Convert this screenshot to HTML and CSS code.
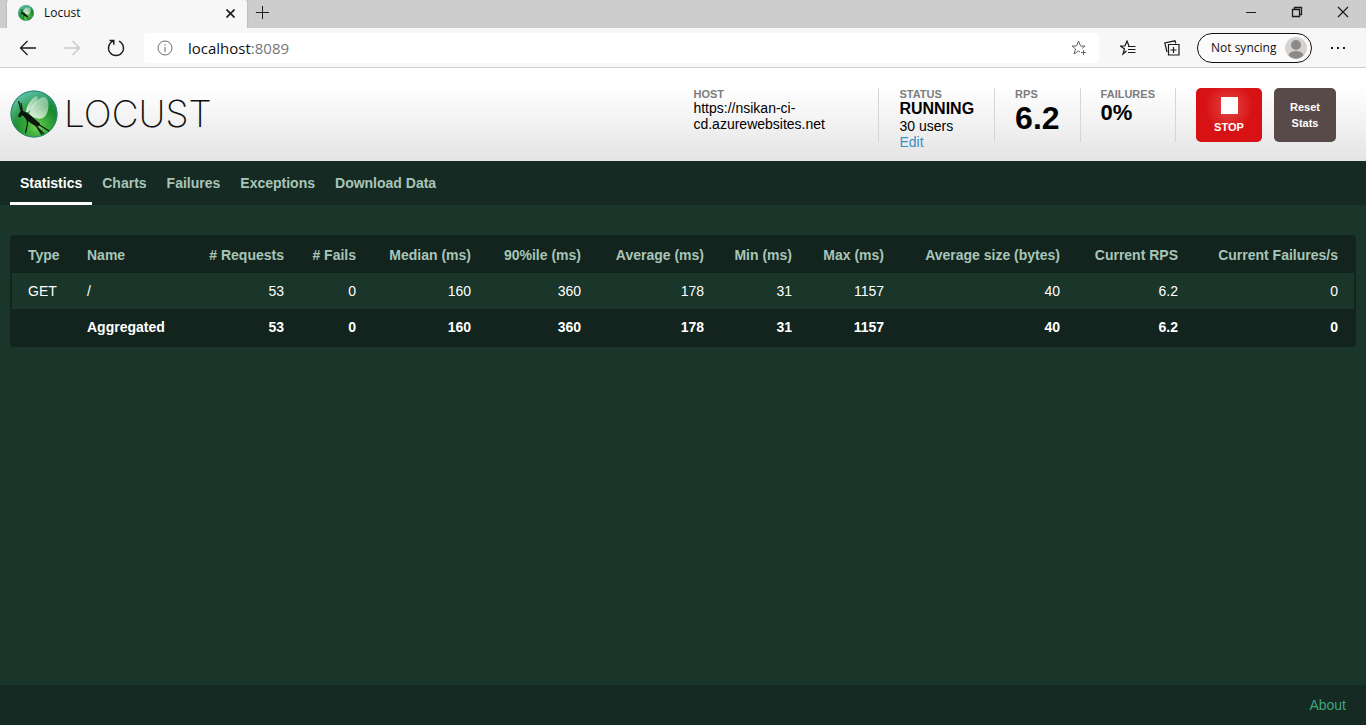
FILE: index.html
```
<!DOCTYPE html>
<html lang="en">
<head>
<meta charset="utf-8">
<title>Locust</title>
<link rel="stylesheet" href="styles.css">
</head>
<body>
<svg width="0" height="0" class="defs" aria-hidden="true">
  <defs>
    <radialGradient id="ball" cx="55%" cy="75%" r="70%">
      <stop offset="0" stop-color="#86e45c"/>
      <stop offset="0.3" stop-color="#45b540"/>
      <stop offset="0.65" stop-color="#1b8a30"/>
      <stop offset="1" stop-color="#2b9c84"/>
    </radialGradient>
    <linearGradient id="sheen" x1="0" y1="0" x2="0.7" y2="1">
      <stop offset="0" stop-color="#7fd8dc" stop-opacity="0.9"/>
      <stop offset="0.35" stop-color="#6cca90" stop-opacity="0.4"/>
      <stop offset="0.6" stop-color="#0d8a24" stop-opacity="0.25"/>
      <stop offset="1" stop-color="#0d6a34" stop-opacity="0"/>
    </linearGradient>
    <linearGradient id="wing" x1="1" y1="0" x2="0" y2="1">
      <stop offset="0" stop-color="#fff" stop-opacity="0.35"/>
      <stop offset="1" stop-color="#fff" stop-opacity="0.85"/>
    </linearGradient>
    <symbol id="locust" viewBox="0 0 48 48">
      <circle cx="24" cy="24" r="23.500" fill="url(#ball)"/>
      <circle cx="24" cy="24" r="23" fill="url(#sheen)" stroke="#2a8a78"/>
      <path d="M16 22C16 16 22 7 27 6c3 1-2 10-9 16z" fill="url(#wing)"/>
      <path d="M19 24C22 13 30 6 35 7c5 3 4 13 1 18-3 5-11 5-17-1z" fill="url(#wing)"/>
      <path d="M9 24l1.500-2.500 3-.5 2.500 1.500 3 1.500 5 4.500 6 5-1 3-6-2-6-4-3.500-4.500-2-.5-1 2-2.500-1z" fill="#0b140e"/>
      <path d="M11.500 22 8.500 11M12.500 22l-1.500-9M17 28l.5 6L15.500 43M21 31l13 13M25 34l7 11M28 34l11 7" fill="none" stroke="#0b140e" stroke-width="1.200"/>
    </symbol>
  </defs>
</svg>

<div class="browser">
  <div class="tabstrip">
    <div class="tab">
      <svg class="favicon"><use href="#locust"/></svg>
      <span class="tab-title">Locust</span>
      <button class="icon-button tab-close" aria-label="Close tab"><svg width="9" height="9" viewBox="0 0 9 9"><path d="M.5.5l8 8M8.500.5l-8 8" stroke-width="1.600"/></svg></button>
    </div>
    <button class="icon-button new-tab" aria-label="New tab"><svg width="13" height="13" viewBox="0 0 13 13"><path d="M6.500 0v13M0 6.500h13"/></svg></button>
    <div class="window-buttons">
      <button class="icon-button" aria-label="Minimize"><svg width="12" height="12" viewBox="0 0 12 12"><path d="M1 6.500h10"/></svg></button>
      <button class="icon-button" aria-label="Restore"><svg width="12" height="12" viewBox="0 0 12 12"><path d="M1.500 3.500h7v7h-7zM3.500 3.500v-2h7v7h-2" stroke-width="1.300"/></svg></button>
      <button class="icon-button" aria-label="Close"><svg width="12" height="12" viewBox="0 0 12 12"><path d="M1 1l10 10M11 1 1 11" stroke-width="1.200"/></svg></button>
    </div>
  </div>
  <div class="toolbar">
    <div class="history">
      <button class="icon-button" aria-label="Back"><svg width="18" height="16" viewBox="0 0 18 16"><path d="M17 8H2M8.500 1 1.500 8l7 7" stroke-width="1.300"/></svg></button>
      <button class="icon-button faded" aria-label="Forward"><svg width="18" height="16" viewBox="0 0 18 16"><path d="M1 8h15M9.500 1l7 7-7 7" stroke-width="1.300"/></svg></button>
      <button class="icon-button" aria-label="Refresh"><svg width="18" height="18" viewBox="0 0 18 18"><path d="M12 2.200A7.500 7.500 0 1 1 6 2.200M2.500 1.500h4.300v4.300" stroke-width="1.400"/></svg></button>
    </div>
    <div class="address">
      <svg class="info" width="16" height="16" viewBox="0 0 16 16"><circle cx="8" cy="8" r="7"/><path d="M8 7v5M8 4v1.500"/></svg>
      <span class="url">localhost<span class="port">:8089</span></span>
      <button class="icon-button star" aria-label="Add to favorites"><svg width="16" height="16" viewBox="0 0 16 16"><path d="M9 12l-1.500-1L3 14l1.500-5L1 6h4.500L7.500 1l2 5H14l-3 2.500M12.500 10v5M10 12.500h5"/></svg></button>
    </div>
    <div class="tools">
      <button class="icon-button" aria-label="Favorites"><svg width="16" height="16" viewBox="0 0 16 16"><path d="M6.500 11 3 14l1.500-5L.5 6h4.500L7 1l2 5M8 6.500h7.500M8 9.500h7.500M8 12.500h7.500" stroke-width="1.200"/></svg></button>
      <button class="icon-button" aria-label="Collections"><svg width="16" height="16" viewBox="0 0 16 16"><path d="M4.500 4.500h10.500v10.500h-10.500zM9.500 7v6M6.500 10h6M3 12 .8 3 11 .8l.8 2.700" stroke-width="1.200"/></svg></button>
    </div>
    <button class="profile">Not syncing
      <svg width="22" height="22" viewBox="0 0 22 22"><circle cx="11" cy="11" r="11" fill="#d5d3d1"/><circle cx="11" cy="8" r="5" fill="#8d8986"/><path d="M3.500 18c1-3 4-4 7.500-4s6.500 1 7.500 4c-4 5-11 5-15 0z" fill="#8d8986"/></svg>
    </button>
    <button class="icon-button more" aria-label="Settings and more"><svg width="16" height="4" viewBox="0 0 16 4"><path d="M1 1h2v2H1zM7 1h2v2H7zM13 1h2v2h-2z" class="dots"/></svg></button>
  </div>
</div>

<header class="top">
  <div class="logo"><svg class="mark"><use href="#locust"/></svg><span class="wordmark">LOCUST</span></div>
  <div class="boxes">
    <div class="box host"><div class="label">HOST</div><div class="text">https://nsikan-ci-cd.azurewebsites.net</div></div>
    <div class="box"><div class="label">STATUS</div><div class="state">RUNNING</div><div class="text">30 users</div><a class="edit" href="#edit">Edit</a></div>
    <div class="box"><div class="label">RPS</div><div class="rps">6.2</div></div>
    <div class="box"><div class="label">FAILURES</div><div class="fail">0%</div></div>
    <div class="actions">
      <button class="stop"><span class="square"></span>STOP</button>
      <button class="reset">Reset Stats</button>
    </div>
  </div>
</header>

<nav class="menu">
  <a class="active" href="#stats">Statistics</a>
  <a href="#charts">Charts</a>
  <a href="#failures">Failures</a>
  <a href="#exceptions">Exceptions</a>
  <a href="#download">Download Data</a>
</nav>

<main>
  <table class="stats">
    <colgroup><col class="type"><col class="name"><col class="requests"><col class="fails"><col class="median"><col class="ninety"><col class="average"><col class="min"><col class="max"><col class="size"><col class="current"><col class="failrate"></colgroup>
    <thead>
      <tr><th>Type</th><th>Name</th><th># Requests</th><th># Fails</th><th>Median (ms)</th><th>90%ile (ms)</th><th>Average (ms)</th><th>Min (ms)</th><th>Max (ms)</th><th>Average size (bytes)</th><th>Current RPS</th><th>Current Failures/s</th></tr>
    </thead>
    <tbody>
      <tr><td>GET</td><td>/</td><td>53</td><td>0</td><td>160</td><td>360</td><td>178</td><td>31</td><td>1157</td><td>40</td><td>6.2</td><td>0</td></tr>
      <tr class="total"><td></td><td>Aggregated</td><td>53</td><td>0</td><td>160</td><td>360</td><td>178</td><td>31</td><td>1157</td><td>40</td><td>6.2</td><td>0</td></tr>
    </tbody>
  </table>
</main>

<footer><a href="#about">About</a></footer>
</body>
</html>
```
FILE: styles.css
```
* { box-sizing: border-box; }
body {
  margin: 0;
  min-height: 100vh;
  display: flex;
  flex-direction: column;
  background: #1a352a;
  font: 14px/16px "Liberation Sans", Arial, sans-serif;
}
button { font: inherit; border: 0; padding: 0; }
a { text-decoration: none; }
svg { display: block; }
.defs { position: absolute; }

/* Browser frame */
.browser { font-family: "Open Sans", "Noto Sans", sans-serif; color: #111; }
.icon-button {
  display: flex;
  align-items: center;
  justify-content: center;
  background: none;
}
.icon-button svg, .info { fill: none; stroke: #1b1b1b; }
.icon-button .dots { fill: #1b1b1b; stroke: none; }
.tabstrip { display: flex; height: 28px; padding-left: 7px; background: #cdcdcd; }
.tab {
  display: flex;
  align-items: center;
  width: 240px;
  padding: 0 12px 2px 11px;
  background: #f7f7f7;
  border-radius: 2px 2px 0 0;
  box-shadow: 0 0 2px #999;
  clip-path: inset(0 -2px 0 -2px);
}
.favicon { width: 16px; height: 16px; }
.tab-title { margin-left: 10px; font-size: 12px; }
.tab-close { margin-left: auto; }
.new-tab { margin-left: 9px; height: 24px; }
.window-buttons { display: flex; margin-left: auto; height: 23px; }
.window-buttons button { width: 46px; }
.toolbar {
  display: flex;
  align-items: center;
  height: 40px;
  padding-right: 20px;
  background: #f7f7f7;
  border-bottom: 1px solid #cecece;
}
.history { display: flex; gap: 26px; padding: 0 19px; }
.faded { opacity: 0.2; }
.address {
  flex: 1;
  display: flex;
  align-items: center;
  height: 30px;
  padding: 0 12px 0 13px;
  background: #fff;
  border-radius: 4px;
}
.address .info { stroke: #6b6b6b; }
.url { margin-left: 15px; font-size: 15px; }
.port { color: #767676; }
.star { margin-left: auto; }
.star svg { stroke: #666; }
.tools { display: flex; gap: 28px; padding: 0 17px 0 21px; }
.profile {
  display: flex;
  align-items: center;
  justify-content: space-between;
  width: 115px;
  height: 30px;
  padding: 0 4px 0 13px;
  border: 1px solid #111;
  border-radius: 15px;
  background: #fbfbfb;
  color: #111;
  font-size: 12px;
  white-space: nowrap;
}
.more { margin-left: 18px; }

/* Page header */
.top {
  display: flex;
  justify-content: space-between;
  height: 93px;
  padding: 20px 30px 0 10px;
  background: linear-gradient(#fff 20%, #e4e4e4);
}
.logo { display: flex; align-items: center; height: 52px; }
.mark { width: 48px; height: 48px; }
.wordmark {
  margin-left: 6px;
  color: #111;
  font: 200 37px/48px Inter, sans-serif;
}
.boxes { display: flex; }
.box { height: 54px; padding: 0 20px; border-right: 1px solid #d6d6d6; }
.host { width: 206px; }
.label { color: #7d7d7d; font-size: 11px; font-weight: bold; line-height: 12px; }
.state { font-size: 16px; font-weight: bold; line-height: 18px; }
.edit { display: block; color: #3d8fc6; }
.rps { font-size: 32px; font-weight: bold; line-height: 36px; }
.fail { font-size: 22px; font-weight: bold; line-height: 26px; }
.actions { display: flex; gap: 12px; padding-left: 20px; }
.actions button {
  height: 54px;
  border-radius: 5px;
  color: #fff;
  font-size: 11px;
  font-weight: bold;
}
.actions .stop {
  display: flex;
  flex-direction: column;
  align-items: center;
  width: 66px;
  padding-top: 9px;
  background: radial-gradient(circle at 50% 35%, #e24848, #d81214 50%);
}
.square { width: 17px; height: 17px; margin-bottom: 5px; background: #fff; }
.actions .reset { width: 62px; padding: 0 12px; background: #584a48; line-height: 16px; }

/* Navigation */
.menu { display: flex; height: 44px; padding: 0 10px; background: #142a22; }
.menu a {
  padding: 14px 10px 0;
  border-bottom: 3px solid transparent;
  color: #a8c5b8;
  font-weight: bold;
}
.menu .active { color: #fff; border-color: #fff; }

/* Statistics table */
main { flex: 1; padding: 30px 10px; }
.stats {
  table-layout: fixed;
  width: 100%;
  padding: 2px;
  border-spacing: 0;
  background: #12241d;
  border-radius: 4px;
  color: #fff;
}
.stats th, .stats td { height: 36px; padding: 0 16px 0 8px; text-align: right; white-space: nowrap; }
.stats th { color: #a8c5b8; }
.stats th:first-child, .stats td:first-child, .stats th:nth-child(2), .stats td:nth-child(2) {
  padding: 0 0 0 16px;
  text-align: left;
}
.stats tbody tr { background: #1a352a; }
.stats tbody .total { background: none; font-weight: bold; }
.type { width: 59px; }
.name { width: 122px; }
.requests { width: 107px; }
.fails { width: 72px; }
.median { width: 115px; }
.ninety { width: 110px; }
.average { width: 123px; }
.min { width: 88px; }
.max { width: 92px; }
.size { width: 176px; }
.current { width: 118px; }
.failrate { width: 160px; }

footer {
  height: 40px;
  padding: 12px 20px;
  background: #142a22;
  text-align: right;
}
footer a { color: #3fa57c; }
```
